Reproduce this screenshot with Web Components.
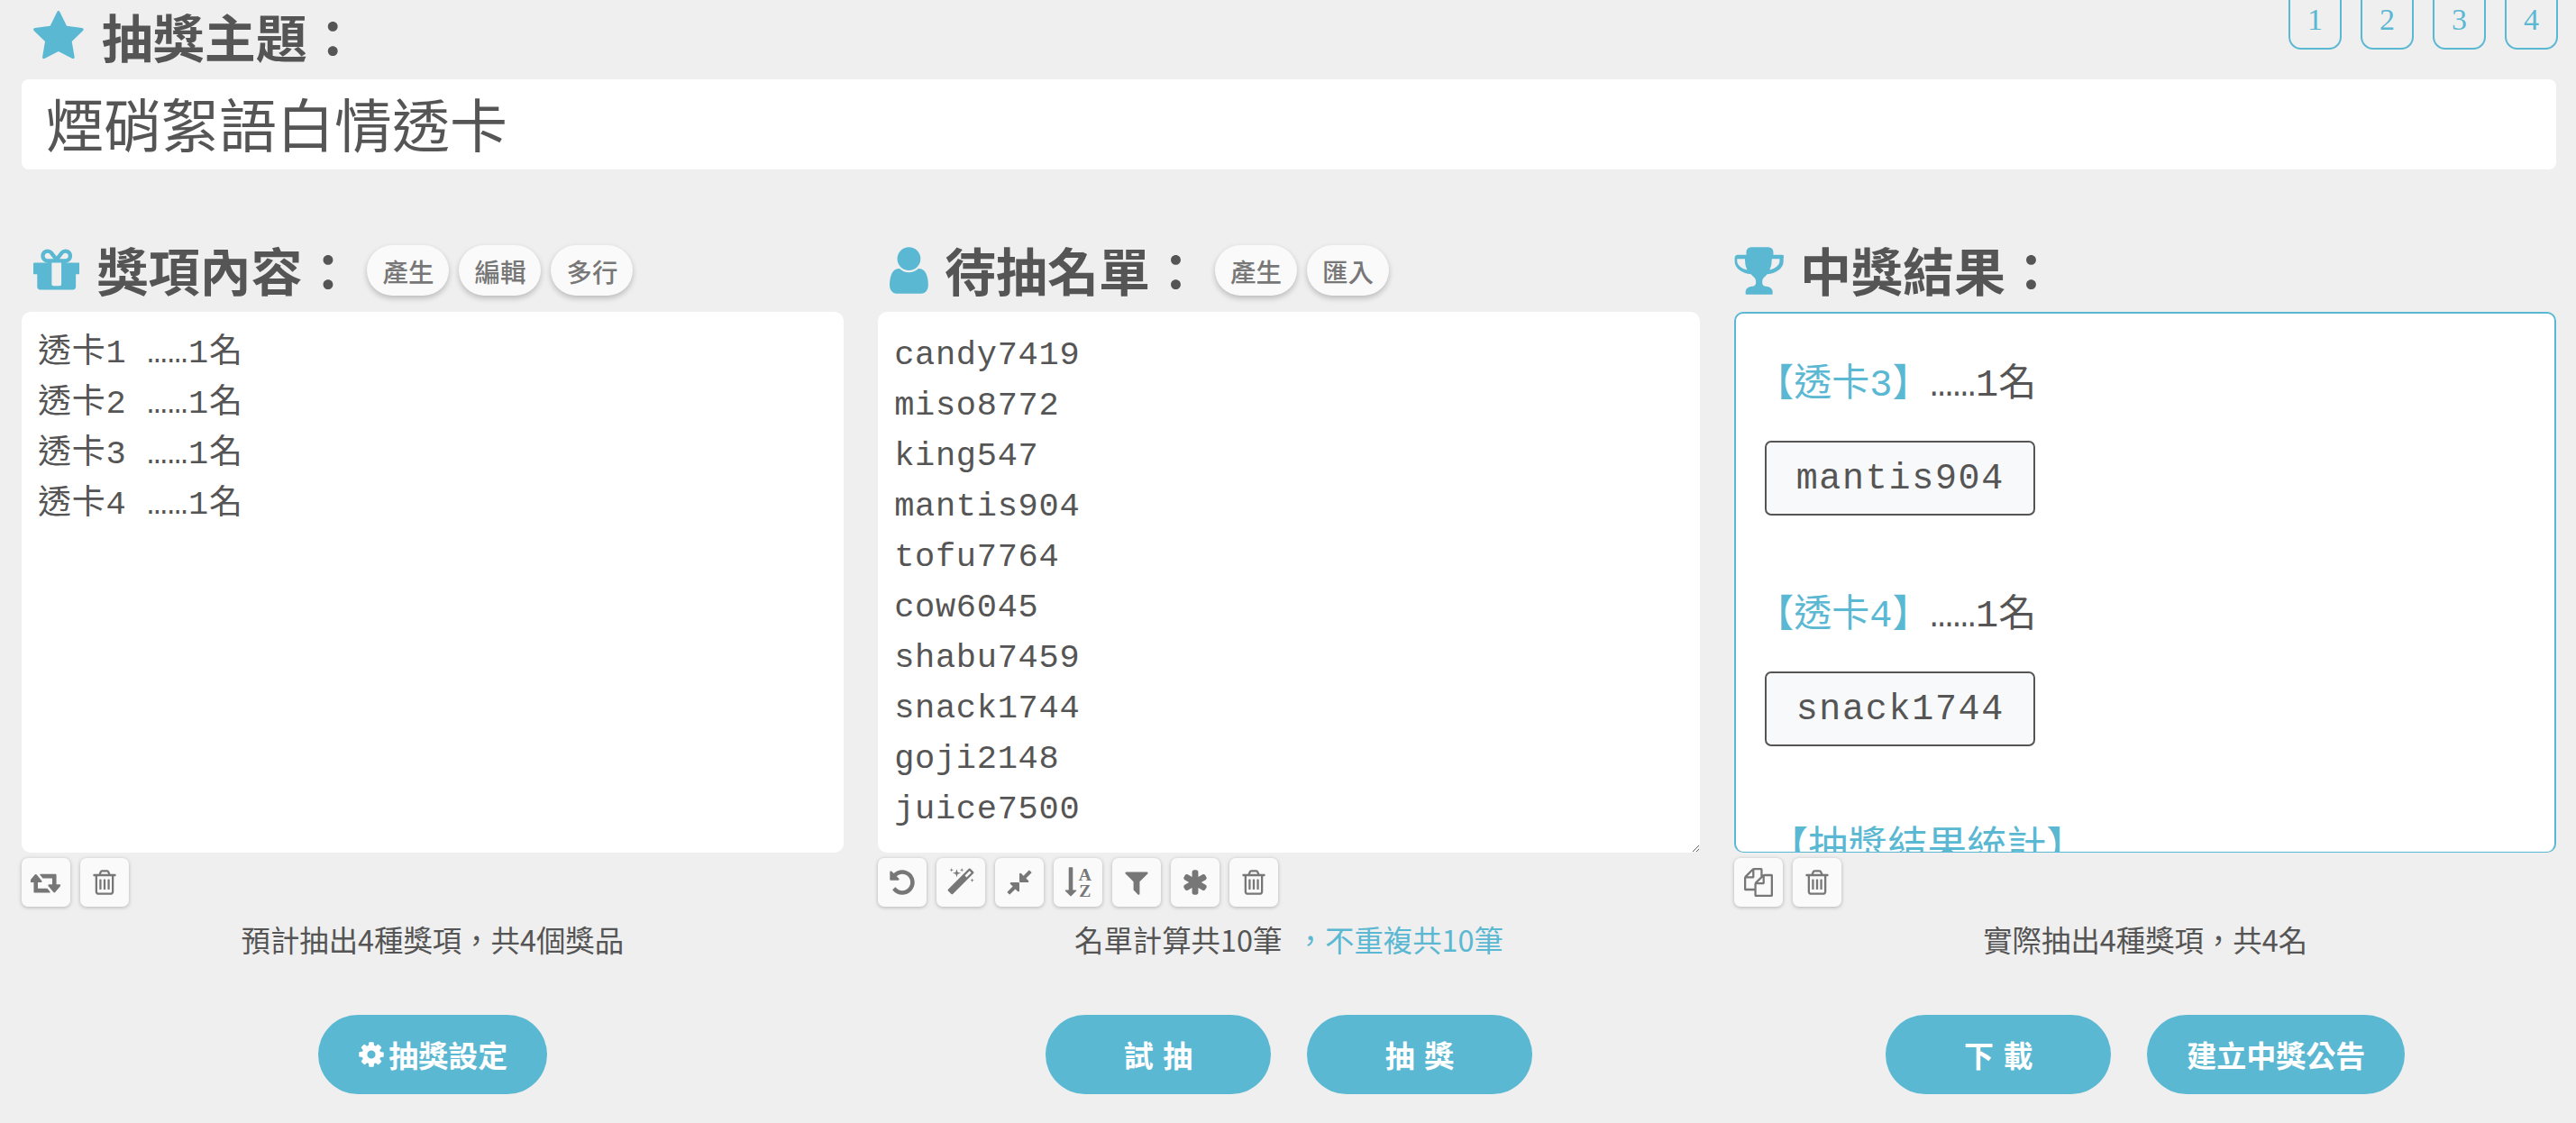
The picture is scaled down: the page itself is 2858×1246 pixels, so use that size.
<!DOCTYPE html>
<html lang="zh-Hant">
<head>
<meta charset="utf-8">
<title>抽獎</title>
<style>
html, body { margin: 0; padding: 0; background: #efefef; }
body { font-family: "Noto Sans CJK TC", "Liberation Sans", sans-serif; color: #555; width: 2858px; height: 1246px; overflow: hidden; }
</style>
</head>
<body>
<lucky-page>
  <section-title slot="theme" icon="star">抽獎主題：</section-title>
  <page-tabs slot="tabs"></page-tabs>
  <theme-input slot="input">煙硝絮語白情透卡</theme-input>

  <draw-column slot="col">
    <section-title slot="head" icon="gift">獎項內容：
      <chip-btn slot="chips">產生</chip-btn><chip-btn slot="chips">編輯</chip-btn><chip-btn slot="chips">多行</chip-btn>
    </section-title>
    <list-box slot="box" lines="透卡1 ……1名|透卡2 ……1名|透卡3 ……1名|透卡4 ……1名" pad="18"></list-box>
    <tool-btn slot="tools" icon="retweet"></tool-btn><tool-btn slot="tools" icon="trash"></tool-btn>
    <span slot="status">預計抽出4種獎項，共4個獎品</span>
    <pill-btn slot="actions" icon="cog">抽獎設定</pill-btn>
  </draw-column>

  <draw-column slot="col">
    <section-title slot="head" icon="user">待抽名單：
      <chip-btn slot="chips">產生</chip-btn><chip-btn slot="chips">匯入</chip-btn>
    </section-title>
    <list-box slot="box" lines="candy7419|miso8772|king547|mantis904|tofu7764|cow6045|shabu7459|snack1744|goji2148|juice7500" pad="20" grip></list-box>
    <tool-btn slot="tools" icon="undo"></tool-btn><tool-btn slot="tools" icon="magic"></tool-btn><tool-btn slot="tools" icon="compress"></tool-btn><tool-btn slot="tools" icon="sort"></tool-btn><tool-btn slot="tools" icon="filter"></tool-btn><tool-btn slot="tools" icon="asterisk"></tool-btn><tool-btn slot="tools" icon="trash"></tool-btn>
    <span slot="status">名單計算共10筆 <span style="color:#5bb8d2;margin-left:8px">，不重複共10筆</span></span>
    <pill-btn slot="actions" wide="250">試 抽</pill-btn><pill-btn slot="actions" wide="250">抽 獎</pill-btn>
  </draw-column>

  <draw-column slot="col">
    <section-title slot="head" icon="trophy">中獎結果：</section-title>
    <result-box slot="box">
      <winner-group prize="【透卡3】" count="……1名" name="mantis904"></winner-group>
      <winner-group prize="【透卡4】" count="……1名" name="snack1744"></winner-group>
      <div slot="summary">【抽獎結果統計】</div>
    </result-box>
    <tool-btn slot="tools" icon="files"></tool-btn><tool-btn slot="tools" icon="trash"></tool-btn>
    <span slot="status">實際抽出4種獎項，共4名</span>
    <pill-btn slot="actions" wide="250">下 載</pill-btn><pill-btn slot="actions" wide="286">建立中獎公告</pill-btn>
  </draw-column>
</lucky-page>

<script>
const CJK = '"Noto Sans CJK TC", sans-serif';
const MONO = '"Liberation Mono", "Noto Sans CJK TC", monospace';

const ICONS = {
  star: 'M1728 647q0 22-26 48l-363 354 86 500q1 7 1 20 0 21-10.5 35.5t-30.5 14.5q-19 0-40-12l-449-236-449 236q-22 12-40 12-21 0-31.5-14.5t-10.5-35.5q0-6 2-20l86-500-364-354q-25-27-25-48 0-37 56-46l502-73 225-455q19-41 49-41t49 41l225 455 502 73q56 9 56 46z',
  gift: 'M1056 1356v-716h-320v716q0 25 18 38.5t46 13.5h192q28 0 46-13.5t18-38.5zm-456-844h195l-126-161q-26-31-69-31-40 0-68 28t-28 68 28 68 68 28zm688-96q0-40-28-68t-68-28q-43 0-69 31l-125 161h194q40 0 68-28t28-68zm376 256v320q0 14-9 23t-23 9h-96v416q0 40-28 68t-68 28h-1088q-40 0-68-28t-28-68v-416h-96q-14 0-23-9t-9-23v-320q0-14 9-23t23-9h440q-93 0-158.5-65.5t-65.5-158.5 65.5-158.5 158.5-65.5q107 0 168 77l128 165 128-165q61-77 168-77 93 0 158.5 65.5t65.5 158.5-65.5 158.5-158.5 65.5h440q14 0 23 9t9 23z',
  user: 'M1536 1399q0 109-62.5 187t-150.5 78h-854q-88 0-150.5-78t-62.5-187q0-85 8.5-160.5t31.5-151.5 58.5-130 94-88.5 134.5-34.5q131 128 313 128t313-128q76 0 134.5 34.5t94 88.5 58.5 130 31.5 151.5 8.5 160.5zm-256-887q0 159-112.5 271.5t-271.5 112.5-271.5-112.5-112.5-271.5 112.5-271.5 271.5-112.5 271.5 112.5 112.5 271.5z',
  trophy: 'M522 883q-74-162-74-371h-256v96q0 78 94.5 162t235.5 113zm1078-275v-96h-256q0 209-74 371 141-29 235.5-113t94.5-162zm128-128v128q0 71-41.5 143t-112 130-173 97.5-215.5 44.5q-42 54-95 95-38 34-52.5 75.5t-14.5 96.5q0 58 32.5 98t103.5 40q80 0 144 48.5t64 121.5v64q0 14-9 23t-23 9h-832q-14 0-23-9t-9-23v-64q0-73 64-121.5t144-48.5q71 0 103.5-40t32.5-98q0-55-14.5-96.5t-52.5-75.5q-53-41-95-95-113-5-215.5-44.5t-173-97.5-112-130-41.5-143v-128q0-40 28-68t68-28h288v-96q0-66 47-113t113-47h576q66 0 113 47t47 113v96h288q40 0 68 28t28 68z',
  trash: 'M704 736v576q0 14-9 23t-23 9h-64q-14 0-23-9t-9-23v-576q0-14 9-23t23-9h64q14 0 23 9t9 23zm256 0v576q0 14-9 23t-23 9h-64q-14 0-23-9t-9-23v-576q0-14 9-23t23-9h64q14 0 23 9t9 23zm256 0v576q0 14-9 23t-23 9h-64q-14 0-23-9t-9-23v-576q0-14 9-23t23-9h64q14 0 23 9t9 23zm128 724v-948h-896v948q0 22 7 40.5t14.5 27 10.5 8.5h832q3 0 10.5-8.5t14.5-27 7-40.5zm-672-1076h448l-48-117q-7-9-17-11h-317q-10 2-17 11zm928 32v64q0 14-9 23t-23 9h-96v948q0 83-47 143.5t-113 60.5h-832q-66 0-113-58.5t-47-141.5v-952h-96q-14 0-23-9t-9-23v-64q0-14 9-23t23-9h309l70-167q15-37 54-63t79-26h320q40 0 79 26t54 63l70 167h309q14 0 23 9t9 23z',
  retweet: 'M1216 1504q0 13-9.5 22.5t-22.5 9.5h-960q-8 0-13.5-2t-9-7-5.5-8-3-11.5-1-11.5v-600h-192q-26 0-45-19t-19-45q0-24 15-41l320-384q19-22 49-22t49 22l320 384q15 17 15 41 0 26-19 45t-45 19h-192v384h576q16 0 25 11l160 192q7 10 7 21zm640-416q0 24-15 41l-320 384q-20 23-49 23t-49-23l-320-384q-15-17-15-41 0-26 19-45t45-19h192v-384h-576q-16 0-25-12l-160-192q-7-9-7-20 0-13 9.5-22.5t22.5-9.5h960q8 0 13.5 2t9 7 5.5 8 3 11.5 1 11.5v600h192q26 0 45 19t19 45z',
  undo: 'M1664 896q0 156-61 298t-164 245-245 164-298 61q-172 0-327-72.5t-264-204.5q-7-10-6.5-22.5t8.5-20.5l137-138q10-9 25-9 16 2 23 12 73 95 179 147t225 52q104 0 198.5-40.5t163.5-109.5 109.5-163.5 40.5-198.5-40.5-198.5-109.5-163.5-163.5-109.5-198.5-40.5q-98 0-188 35.5t-160 101.5l137 138q31 30 14 69-17 40-59 40h-448q-26 0-45-19t-19-45v-448q0-42 40-59 39-17 69 14l130 129q107-101 244.5-156.5t284.5-55.5q156 0 298 61t245 164 164 245 61 298z',
  magic: 'M1254 581l293-293-107-107-293 293zm447-293q0 27-18 45l-1286 1286q-18 18-45 18t-45-18l-198-198q-18-18-18-45t18-45l1286-1286q18-18 45-18t45 18l198 198q18 18 18 45zm-1351-190l98 30-98 30-30 98-30-98-98-30 98-30 30-98zm350 162l196 60-196 60-60 196-60-196-196-60 196-60 60-196zm930 478l98 30-98 30-30 98-30-98-98-30 98-30 30-98zm-640-640l98 30-98 30-30 98-30-98-98-30 98-30 30-98z',
  compress: 'M896 960v448q0 26-19 45t-45 19-45-19l-144-144-332 332q-10 10-23 10t-23-10l-114-114q-10-10-10-23t10-23l332-332-144-144q-19-19-19-45t19-45 45-19h448q26 0 45 19t19 45zm755-672q0 13-10 23l-332 332 144 144q19 19 19 45t-19 45-45 19h-448q-26 0-45-19t-19-45v-448q0-26 19-45t45-19 45 19l144 144 332-332q10-10 23-10t23 10l114 114q10 10 10 23z',
  filter: 'M1595 295q17 41-14 70l-493 493v742q0 42-39 59-13 5-25 5-27 0-45-19l-256-256q-19-19-19-45v-486l-493-493q-31-29-14-70 17-39 59-39h1280q42 0 59 39z',
  asterisk: 'M1546 1050q46 26 59.5 77.5t-12.5 97.5l-64 110q-26 46-77.5 59.5t-97.5-12.5l-266-153v307q0 52-38 90t-90 38h-128q-52 0-90-38t-38-90v-307l-266 153q-46 26-97.5 12.5t-77.5-59.5l-64-110q-26-46-12.5-97.5t59.5-77.5l266-154-266-154q-46-26-59.5-77.5t12.5-97.5l64-110q26-46 77.5-59.5t97.5 12.5l266 153v-307q0-52 38-90t90-38h128q52 0 90 38t38 90v307l266-153q46-26 97.5-12.5t77.5 59.5l64 110q26 46 12.5 97.5t-59.5 77.5l-266 154z',
  cog: 'M1152 896q0-106-75-181t-181-75-181 75-75 181 75 181 181 75 181-75 75-181zm512-109v222q0 12-8 23t-20 13l-185 28q-19 54-39 91 35 50 107 138 10 12 10 25t-9 23q-27 37-99 108t-94 71q-12 0-26-9l-138-108q-44 23-91 38-16 136-29 186-7 28-36 28h-222q-14 0-24.5-8.5t-11.5-21.5l-28-184q-49-16-90-37l-141 107q-10 9-25 9-14 0-25-11-126-114-165-168-7-10-7-23 0-12 8-23 15-21 51-66.5t54-70.5q-27-50-41-99l-183-27q-13-2-21-12.5t-8-23.5v-222q0-12 8-23t19-13l186-28q14-46 39-92-40-57-107-138-10-12-10-24 0-10 9-23 26-36 98.5-107.5t94.5-71.5q13 0 26 10l138 107q44-23 91-38 16-136 29-186 7-28 36-28h222q14 0 24.5 8.5t11.5 21.5l28 184q49 16 90 37l142-107q9-9 24-9 13 0 25 10 129 119 165 170 7 8 7 22 0 12-8 23-15 21-51 66.5t-54 70.5q26 50 41 98l183 28q13 2 21 12.5t8 23.5z',
  files: 'M1696 384q40 0 68 28t28 68v1216q0 40-28 68t-68 28h-960q-40 0-68-28t-28-68v-288h-544q-40 0-68-28t-28-68v-672q0-40 20-88t48-76l408-408q28-28 76-48t88-20h416q40 0 68 28t28 68v328q68-40 128-40h416zm-544 213l-299 299h299v-299zm-640-384l-299 299h299v-299zm196 647l316-316v-416h-384v416q0 40-28 68t-68 28h-416v640h512v-256q0-40 20-88t48-76zm956 804v-1152h-384v416q0 40-28 68t-68 28h-416v640h896z',
  sortarrow: 'M736 1440q0 12-10 24l-319 319q-10 9-23 9-12 0-23-9l-320-320q-15-16-7-35 8-20 30-20h192v-1376q0-14 9-23t23-9h192q14 0 23 9t9 23v1376h192q14 0 23 9t9 23z'
};

function iconSvg(name, size) {
  if (name == 'sort') {
    return `<svg width="${size}" height="${size}" viewBox="0 0 1664 1792" fill="currentColor" style="overflow:visible">
      <path d="${ICONS.sortarrow}" transform="translate(0,-40)"/>
      <text x="1270" y="760" text-anchor="middle" font-family="Liberation Serif, serif" font-weight="700" font-size="1100">A</text>
      <text x="1270" y="1790" text-anchor="middle" font-family="Liberation Serif, serif" font-weight="700" font-size="1100">Z</text>
    </svg>`;
  }
  const w = name == 'retweet' ? 1920 : 1792;
  return `<svg width="${size * w / 1792}" height="${size}" viewBox="0 0 ${w} 1792" fill="currentColor"><path d="${ICONS[name]}"/></svg>`;
}

class LuckyPage extends HTMLElement {
  constructor() {
    super();
    this.attachShadow({ mode: 'open' });
    this.shadowRoot.innerHTML = `
    <style>
      :host { display: block; padding: 0 22px 0 24px; position: relative; }
      .top { height: 75px; padding-top: 13px; }
      .cols { display: grid; grid-template-columns: repeat(3, 1fr); column-gap: 38.5px; margin-top: 84px; }
    </style>
    <div class="top"><slot name="theme"></slot></div>
    <slot name="tabs"></slot>
    <slot name="input"></slot>
    <div class="cols"><slot name="col"></slot></div>`;
  }
}

class PageTabs extends HTMLElement {
  constructor() {
    super();
    this.attachShadow({ mode: 'open' });
    this.shadowRoot.innerHTML = `
    <style>
      :host { position: absolute; top: -14px; right: 20px; display: flex; gap: 21px; }
      div { box-sizing: border-box; width: 59px; height: 69px; border: 2px solid #5bb8d2; border-radius: 14px; color: #5bb8d2;
        font: 34px "Liberation Serif", serif; display: flex; align-items: center; justify-content: center; padding-top: 3px; }
    </style>
    <div>1</div><div>2</div><div>3</div><div>4</div>`;
  }
}

class ThemeInput extends HTMLElement {
  constructor() {
    super();
    this.attachShadow({ mode: 'open' });
    this.shadowRoot.innerHTML = `
    <style>
      :host { display: flex; align-items: center; box-sizing: border-box; height: 100px; padding: 0 0 6px 27px; background: #fff; border-radius: 8px;
        font: 400 64px ${CJK}; color: #555; }
    </style>
    <slot></slot>`;
  }
}

class SectionTitle extends HTMLElement {
  constructor() {
    super();
    this.attachShadow({ mode: 'open' });
    const icon = this.getAttribute('icon');
    const lefts = { star: 13, gift: 13, user: 13, trophy: -1 };
    const gaps = { star: 20, gift: 19, user: 18, trophy: 18 };
    const crop = { star: [64, 1664], gift: [128, 1536], user: [256, 1280], trophy: [64, 1664] }[icon];
    this.shadowRoot.innerHTML = `
    <style>
      :host { display: flex; align-items: center; height: 56px; font: 700 57px/56px ${CJK}; color: #555; }
      .ic { color: #5bb8d2; display: flex; margin-left: ${lefts[icon]}px; margin-right: ${gaps[icon]}px; margin-bottom: ${icon == 'star' ? 1 : 0}px; }
      .ic svg { display: block; }
      .txt { padding-bottom: 5px; }
      .chips { display: flex; gap: 11px; margin-left: 15px; }
    </style>
    <span class="ic"><svg width="${crop[1] * 60 / 1792}" height="60" viewBox="${crop[0]} 0 ${crop[1]} 1792" fill="currentColor"><path d="${ICONS[icon]}"/></svg></span>
    <span class="txt"><slot></slot></span>
    <span class="chips"><slot name="chips"></slot></span>`;
  }
}

class ChipBtn extends HTMLElement {
  constructor() {
    super();
    this.attachShadow({ mode: 'open' });
    this.shadowRoot.innerHTML = `
    <style>
      :host { display: flex; align-items: center; justify-content: center; width: 91px; height: 56px; border-radius: 28px;
        background: #fafafa; color: #777; font: 500 28.5px ${CJK}; box-shadow: 0 3px 6px rgba(0,0,0,.22); }
    </style>
    <slot></slot>`;
  }
}

class ToolBtn extends HTMLElement {
  constructor() {
    super();
    this.attachShadow({ mode: 'open' });
    this.shadowRoot.innerHTML = `
    <style>
      :host { display: flex; align-items: center; justify-content: center; width: 54px; height: 54px; border-radius: 7px;
        background: #fafafa; color: #777; box-shadow: 0 1px 4px rgba(0,0,0,.25); }
    </style>
    ${iconSvg(this.getAttribute('icon'), 32)}`;
  }
}

class PillBtn extends HTMLElement {
  constructor() {
    super();
    this.attachShadow({ mode: 'open' });
    const icon = this.getAttribute('icon');
    this.shadowRoot.innerHTML = `
    <style>
      :host { display: flex; align-items: center; justify-content: center; gap: 3px; width: ${this.getAttribute('wide') || 254}px; height: 88px;
        border-radius: 44px; background: #5bb8d2; color: #fff; font: 700 33px ${CJK}; word-spacing: 3px; }
      svg { display: block; }
    </style>
    ${icon ? iconSvg(icon, 32) : ''}<span><slot></slot></span>`;
  }
}

class ListBox extends HTMLElement {
  constructor() {
    super();
    this.attachShadow({ mode: 'open' });
    const rows = this.getAttribute('lines').split('|').map(t => `<div>${t}</div>`).join('');
    this.shadowRoot.innerHTML = `
    <style>
      :host { display: block; }
      .box { box-sizing: border-box; height: 600px; background: #fff; border-radius: 10px; padding: ${this.getAttribute('pad')}px 18px 0;
        font: 37px/56px ${MONO}; letter-spacing: .7px; color: #555; white-space: pre; overflow: hidden; ${this.hasAttribute('grip') ? 'resize: both;' : ''} }
    </style>
    <div class="box">${rows}</div>`;
  }
}

class ResultBox extends HTMLElement {
  constructor() {
    super();
    this.attachShadow({ mode: 'open' });
    this.shadowRoot.innerHTML = `
    <style>
      :host { display: block; box-sizing: border-box; height: 600px; background: #fff; border: 2px solid #5bb8d2; border-bottom-width: 1px;
        border-radius: 10px; padding: 52px 32px 0; overflow: hidden; }
      .sum { color: #5bb8d2; font: 44px/56px ${CJK}; margin: -5px 0 0 4px; white-space: nowrap; }
    </style>
    <slot></slot>
    <div class="sum"><slot name="summary"></slot></div>`;
  }
}

class WinnerGroup extends HTMLElement {
  constructor() {
    super();
    this.attachShadow({ mode: 'open' });
    this.shadowRoot.innerHTML = `
    <style>
      :host { display: block; margin-bottom: 84px; }
      .title { font: 42px/56px ${MONO}; color: #555; white-space: pre; margin-left: -10px; }
      .prize { color: #5bb8d2; }
      .name { box-sizing: border-box; display: flex; align-items: center; justify-content: center; width: 300px; height: 83px; margin-top: 33px; padding-top: 2px;
        background: #f8f9fa; border: 2px solid #555; border-radius: 7px; font: 40px ${MONO}; letter-spacing: 1.7px; color: #555; }
    </style>
    <div class="title"><span class="prize">${this.getAttribute('prize')}</span>${this.getAttribute('count')}</div>
    <div class="name">${this.getAttribute('name')}</div>`;
  }
}

class DrawColumn extends HTMLElement {
  constructor() {
    super();
    this.attachShadow({ mode: 'open' });
    this.shadowRoot.innerHTML = `
    <style>
      :host { display: block; min-width: 0; }
      .head { height: 56px; margin-bottom: 18px; }
      .tools { display: flex; gap: 11px; margin-top: 6px; height: 54px; }
      .status { text-align: center; font: 400 32.4px/46px ${CJK}; color: #555; margin-top: 13px; }
      .actions { display: flex; justify-content: center; gap: 40px; margin-top: 61px; }
    </style>
    <div class="head"><slot name="head"></slot></div>
    <slot name="box"></slot>
    <div class="tools"><slot name="tools"></slot></div>
    <div class="status"><slot name="status"></slot></div>
    <div class="actions"><slot name="actions"></slot></div>`;
  }
}

customElements.define('lucky-page', LuckyPage);
customElements.define('page-tabs', PageTabs);
customElements.define('theme-input', ThemeInput);
customElements.define('section-title', SectionTitle);
customElements.define('chip-btn', ChipBtn);
customElements.define('tool-btn', ToolBtn);
customElements.define('pill-btn', PillBtn);
customElements.define('list-box', ListBox);
customElements.define('result-box', ResultBox);
customElements.define('winner-group', WinnerGroup);
customElements.define('draw-column', DrawColumn);
</script>
</body>
</html>
